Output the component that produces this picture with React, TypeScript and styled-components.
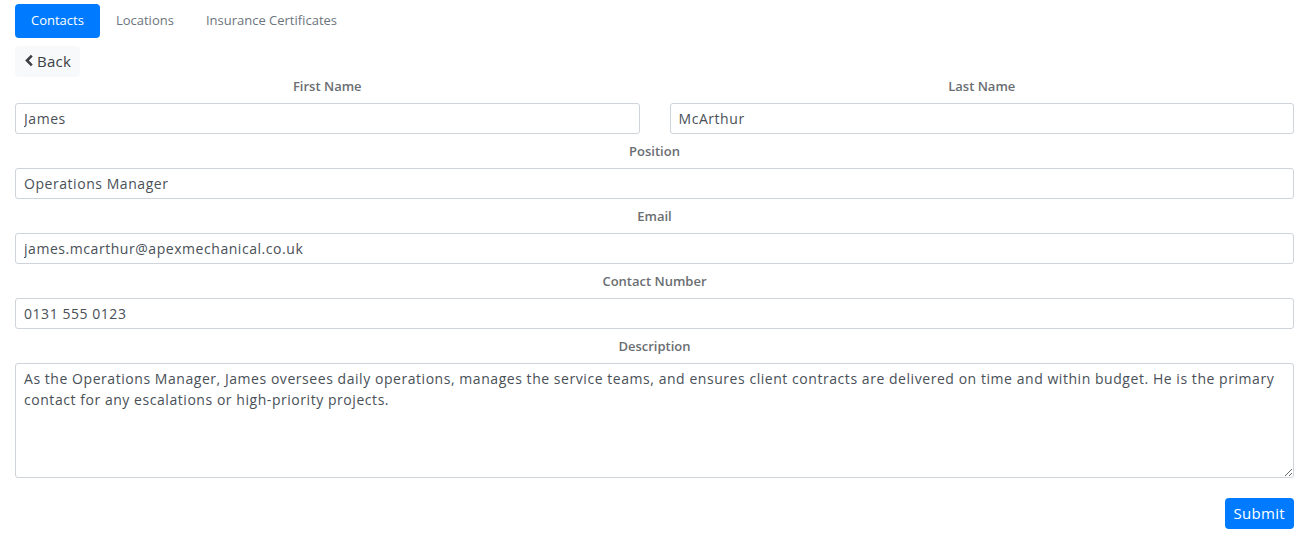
import { useState } from 'react'
import styled, { createGlobalStyle } from 'styled-components'

const GlobalStyle = createGlobalStyle`
  html, body {
    margin: 0;
    padding: 0;
    background: #fff;
  }
  body {
    font-family: 'Open Sans', 'Liberation Sans', sans-serif;
    color: #495057;
  }
  * {
    box-sizing: border-box;
  }
`

const Page = styled.div`
  padding: 4px 14px 0 15px;
`

const Tabs = styled.nav`
  display: flex;
`

const Tab = styled.button<{ $active?: boolean }>`
  height: 34px;
  padding: 0 16px 2px;
  border: none;
  border-radius: 4px;
  font-family: inherit;
  font-size: 13px;
  cursor: pointer;
  background: ${p => (p.$active ? '#007bff' : 'transparent')};
  color: ${p => (p.$active ? '#fff' : '#6c757d')};
`

const BackButton = styled.button`
  display: flex;
  align-items: center;
  gap: 3px;
  margin-top: 8px;
  height: 31px;
  padding: 0 9px 2px;
  border: none;
  border-radius: 4px;
  background: #f8f9fa;
  color: #3b3f44;
  font-family: inherit;
  font-size: 15px;
  letter-spacing: 0.3px;
  cursor: pointer;
`

const Row = styled.div`
  display: grid;
  grid-template-columns: 1fr 1fr;
  column-gap: 30px;
`

const Group = styled.div`
  display: flex;
  flex-direction: column;
  margin-bottom: 8px;
`

const Label = styled.label`
  display: block;
  text-align: center;
  font-size: 13px;
  font-weight: 600;
  line-height: 18px;
  color: #6a6e72;
  margin-bottom: 8px;
`

const Input = styled.input`
  width: 100%;
  height: 31px;
  padding: 0 8px;
  border: 1px solid #ced4da;
  border-radius: 3px;
  font-family: inherit;
  font-size: 14px;
  letter-spacing: 0.55px;
  color: #495057;
  outline: none;
`

const TextArea = styled.textarea`
  width: 100%;
  height: 115px;
  padding: 4px 8px;
  border: 1px solid #ced4da;
  border-radius: 3px;
  font-family: inherit;
  font-size: 14px;
  letter-spacing: 0.55px;
  line-height: 21px;
  color: #495057;
  resize: vertical;
  outline: none;
  display: block;
`

const Actions = styled.div`
  display: flex;
  justify-content: flex-end;
  margin-top: 20px;
`

const SubmitButton = styled.button`
  height: 31px;
  padding: 0 9px 1px;
  border: none;
  border-radius: 4px;
  background: #007bff;
  color: #fff;
  font-family: inherit;
  font-size: 15px;
  letter-spacing: 0.3px;
  cursor: pointer;
`

const tabs = ['Contacts', 'Locations', 'Insurance Certificates']

const App = () => {
  const [active, setActive] = useState('Contacts')
  const [form, setForm] = useState({
    firstName: 'James',
    lastName: 'McArthur',
    position: 'Operations Manager',
    email: 'james.mcarthur@apexmechanical.co.uk',
    phone: '0131 555 0123',
    description:
      'As the Operations Manager, James oversees daily operations, manages the service teams, and ensures client contracts are delivered on time and within budget. He is the primary contact for any escalations or high-priority projects.'
  })

  const set = (key: keyof typeof form) => (e: any) =>
    setForm({ ...form, [key]: e.target.value })

  return (
    <Page>
      <GlobalStyle />
      <Tabs>
        {tabs.map(t => (
          <Tab key={t} $active={t === active} onClick={() => setActive(t)}>
            {t}
          </Tab>
        ))}
      </Tabs>
      <BackButton>
        <svg width="10" height="13" viewBox="0 0 10 13">
          <path
            d="M7.8 1.6 L3 6.5 L7.8 11.4"
            fill="none"
            stroke="currentColor"
            strokeWidth="2.6"
          />
        </svg>
        Back
      </BackButton>
      <form onSubmit={e => e.preventDefault()}>
        <Row>
          <Group>
            <Label>First Name</Label>
            <Input value={form.firstName} onChange={set('firstName')} />
          </Group>
          <Group>
            <Label>Last Name</Label>
            <Input value={form.lastName} onChange={set('lastName')} />
          </Group>
        </Row>
        <Group>
          <Label>Position</Label>
          <Input value={form.position} onChange={set('position')} />
        </Group>
        <Group>
          <Label>Email</Label>
          <Input value={form.email} onChange={set('email')} />
        </Group>
        <Group>
          <Label>Contact Number</Label>
          <Input value={form.phone} onChange={set('phone')} />
        </Group>
        <Group>
          <Label>Description</Label>
          <TextArea value={form.description} onChange={set('description')} />
        </Group>
        <Actions>
          <SubmitButton type="submit">Submit</SubmitButton>
        </Actions>
      </form>
    </Page>
  )
}

export default App
